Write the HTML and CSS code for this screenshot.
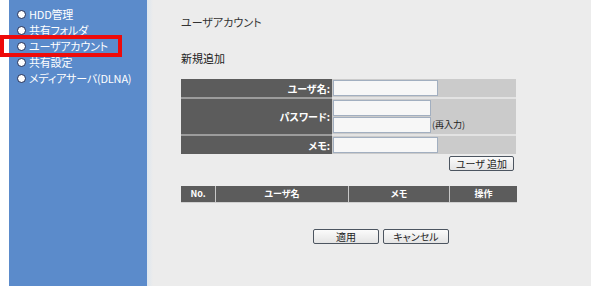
FILE: index.html
```html
<!DOCTYPE html>
<html lang="ja">
<head>
<meta charset="utf-8">
<title>ユーザアカウント</title>
<link rel="stylesheet" href="styles.css">
</head>
<body>
<div class="page">
  <nav class="sidebar">
    <ul class="menu">
      <li class="menu-item">HDD管理</li>
      <li class="menu-item">共有フォルダ</li>
      <li class="menu-item">ユーザアカウント</li>
      <li class="menu-item">共有設定</li>
      <li class="menu-item">メディアサーバ(DLNA)</li>
    </ul>
  </nav>
  <main class="content">
    <h1 class="title">ユーザアカウント</h1>
    <h2 class="section">新規追加</h2>
    <div class="form">
      <div class="label">ユーザ名:</div>
      <div class="field"><input class="input" type="text"></div>
      <div class="label sep">パスワード:</div>
      <div class="field sep stack">
        <input class="input short" type="password">
        <div class="reenter"><input class="input short" type="password"><span class="note">(再入力)</span></div>
      </div>
      <div class="label sep">メモ:</div>
      <div class="field sep"><input class="input" type="text"></div>
    </div>
    <div class="add-row"><button class="btn add">ユーザ 追加</button></div>
    <div class="list">
      <div class="th c-no">No.</div>
      <div class="th c-name">ユーザ名</div>
      <div class="th c-memo">メモ</div>
      <div class="th c-op">操作</div>
    </div>
    <div class="actions">
      <button class="btn">適用</button>
      <button class="btn">キャンセル</button>
    </div>
  </main>
  <div class="highlight"></div>
</div>
</body>
</html>
```
FILE: styles.css
```css
* { box-sizing: border-box; }
html, body { margin: 0; padding: 0; }
body {
  background: #ffffff;
  font-family: "Noto Sans CJK JP", "DejaVu Sans", sans-serif;
  font-feature-settings: "palt";
  color: #333;
}
.page {
  position: relative;
  display: flex;
  width: 591px;
  height: 286px;
  padding-left: 9px;
  overflow: hidden;
}
.sidebar {
  width: 138px;
  height: 286px;
  background: #5b8bcb;
  padding: 6px 0 0 8px;
}
.menu { list-style: none; margin: 0; padding: 0; }
.menu-item {
  display: flex;
  align-items: center;
  height: 16px;
  font-size: 11px;
  line-height: 16px;
  color: #fff;
  letter-spacing: -0.2px;
}
.menu-item::before {
  content: "";
  width: 7px;
  height: 7px;
  border-radius: 50%;
  background: #fff;
  border: 1.5px solid #1d2b55;
  margin-right: 3px;
  flex: none;
}
.content {
  flex: 1;
  height: 286px;
  background: linear-gradient(to right, #dde6ef 0, #ececec 6px);
  padding: 14px 0 0 34px;
}
.title {
  margin: 0;
  font-size: 11px;
  font-weight: normal;
  line-height: 16px;
  color: #333;
}
.section {
  margin: 20px 0 0 0;
  font-size: 11px;
  font-weight: normal;
  line-height: 16px;
  color: #222;
}
.form {
  margin-top: 13px;
  width: 335px;
  display: grid;
  grid-template-columns: 151px 184px;
}
.label {
  background: #5c5c5c;
  color: #fff;
  font-weight: bold;
  font-size: 10px;
  text-align: right;
  padding-right: 2px;
  display: flex;
  align-items: center;
  justify-content: flex-end;
  min-height: 17px;
}
.field {
  background: #cbcbcb;
  padding: 1px 0 1px 1px;
  display: flex;
  align-items: center;
}
.label.sep { border-top: 2px solid #9c9c9c; }
.field.sep { border-top: 2px solid #e3e3e3; }
.stack { flex-direction: column; align-items: flex-start; gap: 1px; }
.reenter { display: flex; align-items: center; }
.input {
  display: block;
  width: 105px;
  height: 16px;
  margin: 0;
  padding: 0;
  border: 1px solid #a2afc0;
  background: #f7f7f7;
}
.input.short { width: 98px; }
.note { font-size: 9px; color: #222; margin-left: 1px; line-height: 12px; }
.add-row {
  width: 335px;
  display: flex;
  justify-content: flex-end;
  margin-top: 2px;
}
.btn {
  height: 15px;
  width: 66px;
  padding: 0;
  font-family: inherit;
  font-feature-settings: "palt";
  font-size: 10px;
  line-height: 13px;
  color: #222;
  background: linear-gradient(#fbfbfb, #e4e4e4);
  border: 1px solid #4c5560;
  border-radius: 2px;
}
.add { width: 65px; margin-right: 2px; }
.list {
  margin-top: 15px;
  width: 336px;
  display: grid;
  grid-template-columns: 34px 133px 101px 68px;
  background: #5c5c5c;
  border-bottom: 1px solid #d0d0d0;
}
.th {
  height: 16px;
  color: #fff;
  font-weight: bold;
  font-size: 9px;
  line-height: 16px;
  text-align: center;
  border-left: 1px solid #c8c8c8;
}
.th.c-no { border-left: none; }
.actions {
  margin: 26px 0 0 132px;
  display: flex;
  gap: 4px;
}
.highlight {
  position: absolute;
  left: 0;
  top: 35px;
  width: 122px;
  height: 22px;
  border: 4px solid #ee0a0a;
}
```
